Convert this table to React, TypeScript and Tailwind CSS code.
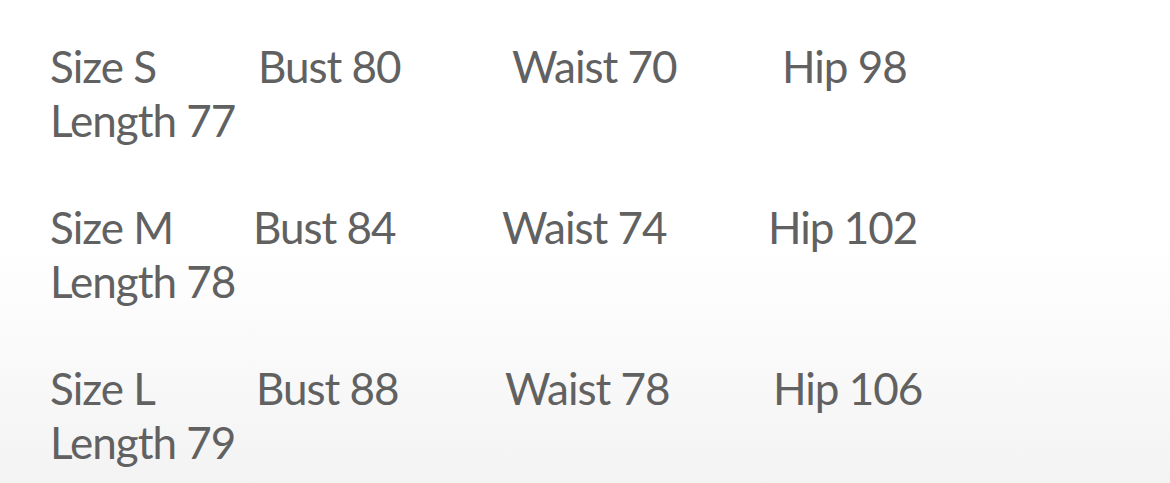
import React from "react";

const rows = [
  { size: "Size S", bust: "Bust 80", waist: "Waist 70", hip: "Hip 98", len: "Length 77", w: ["w-[208px]", "w-[254px]", "w-[270px]"] },
  { size: "Size M", bust: "Bust 84", waist: "Waist 74", hip: "Hip 102", len: "Length 78", w: ["w-[203px]", "w-[249px]", "w-[266px]"] },
  { size: "Size L", bust: "Bust 88", waist: "Waist 78", hip: "Hip 106", len: "Length 79", w: ["w-[206px]", "w-[249px]", "w-[268px]"] },
];

export default function App() {
  return (
    <div className="w-[1170px] h-[483px] overflow-hidden bg-[linear-gradient(180deg,#ffffff_0%,#ffffff_50%,#f8f8f8_80%,#f3f3f3_100%)] text-[#616161] text-[44px] leading-[54px] tracking-[-1px] pl-[50px] pt-[39px] flex flex-col gap-[53px]" style={{ fontFamily: "Lato, 'Open Sans', sans-serif" }}>
      {rows.map((r) => (
        <div key={r.size} className="flex flex-col">
          <div className="flex whitespace-nowrap">
            <span className={`${r.w[0]} shrink-0`}>{r.size}</span>
            <span className={`${r.w[1]} shrink-0`}>{r.bust}</span>
            <span className={`${r.w[2]} shrink-0`}>{r.waist}</span>
            <span className="shrink-0">{r.hip}</span>
          </div>
          <div className="whitespace-nowrap">{r.len}</div>
        </div>
      ))}
    </div>
  );
}
